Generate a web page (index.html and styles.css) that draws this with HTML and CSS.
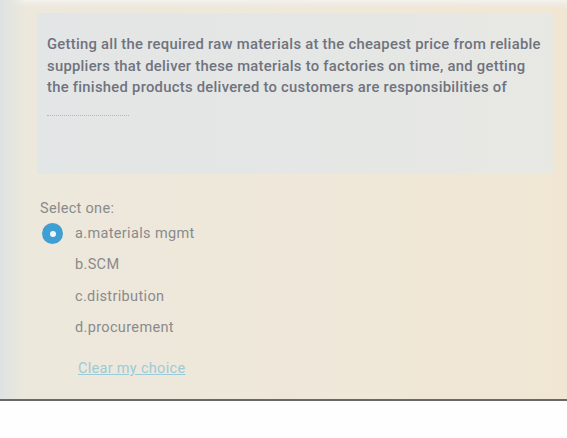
FILE: index.html
```html
<!DOCTYPE html>
<html>
<head>
<meta charset="utf-8">
<link rel="stylesheet" href="styles.css">
</head>
<body>
<div class="photo">
  <div class="question">
    <p class="qtext">Getting all the required raw materials at the cheapest price from reliable<br>suppliers that deliver these materials to factories on time, and getting<br>the finished products delivered to customers are responsibilities of</p>
    <div class="blank"></div>
  </div>
  <div class="answer">
    <div class="prompt">Select one:</div>
    <div class="option"><span class="radio checked"></span><span class="label">a.materials mgmt</span></div>
    <div class="option"><span class="radio"></span><span class="label">b.SCM</span></div>
    <div class="option"><span class="radio"></span><span class="label">c.distribution</span></div>
    <div class="option"><span class="radio"></span><span class="label">d.procurement</span></div>
    <a class="clear">Clear my choice</a>
  </div>
</div>
<div class="below"></div>
</body>
</html>
```

FILE: styles.css
```css
html, body {
  margin: 0;
  padding: 0;
  background: #fdfdfd;
}
body {
  font-family: Roboto, "Liberation Sans", sans-serif;
  width: 567px;
  height: 438px;
  overflow: hidden;
}
.photo {
  height: 401px;
  box-sizing: border-box;
  padding: 13px 14px 0 37px;
  background:
    linear-gradient(90deg, #dde2e4 0px, #e4e5e0 10px, rgba(236,231,219,0) 26px),
    linear-gradient(180deg, #f4f2ee 0, #efebe3 4px, rgba(0,0,0,0) 8px),
    linear-gradient(90deg, #ece8dc 0%, #efe8da 50%, #f1e6d4 100%);
  border-bottom: 2px solid #6a6866;
}
.question {
  background: linear-gradient(90deg, #e3e6e6 0%, #e5e7e5 60%, #e8e8e3 100%);
  height: 161px;
  box-sizing: border-box;
  padding: 21px 0 0 10px;
}
.qtext {
  margin: 0;
  font-size: 14.8px;
  font-weight: 500;
  line-height: 21.5px;
  color: #70737e;
  letter-spacing: 0.27px;
  white-space: nowrap;
}
.blank {
  margin-top: 16px;
  width: 82px;
  border-top: 1px dotted #b5b5b8;
}
.answer {
  padding: 27px 0 0 3px;
  color: #8a8a8c;
}
.prompt {
  font-size: 14.5px;
  line-height: 16px;
  margin-bottom: 1px;
  letter-spacing: 0.3px;
}
.option {
  display: flex;
  align-items: center;
  height: 31.3px;
  font-size: 14.5px;
  letter-spacing: 0.35px;
}
.option:first-of-type {
  height: 22px;
}
.radio {
  width: 21px;
  height: 21px;
  margin: 0 12px 0 2px;
  box-sizing: border-box;
  border-radius: 50%;
  visibility: hidden;
}
.radio.checked {
  visibility: visible;
  background: #3d9fd3;
  position: relative;
}
.radio.checked::after {
  content: "";
  position: absolute;
  left: 7.5px;
  top: 7.5px;
  width: 6px;
  height: 6px;
  border-radius: 50%;
  background: #f2f6f8;
}
.label {
  color: #8a8a8c;
}
.clear {
  display: inline-block;
  margin: 17px 0 0 38px;
  font-size: 14.5px;
  letter-spacing: 0.3px;
  color: #9ccbd8;
  text-decoration: underline;
}
.below {
  height: 35px;
  background: #fefefe;
}
```
